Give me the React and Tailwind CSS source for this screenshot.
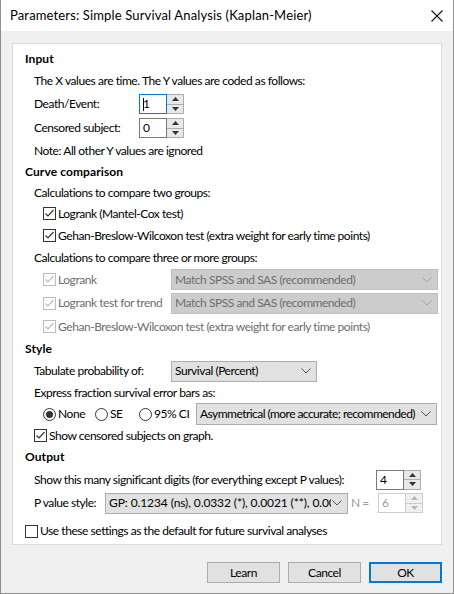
import React from 'react';

const font = { fontFamily: '"Segoe UI", Lato, "Liberation Sans", sans-serif' };

function Chevron({ disabled }) {
    return (
        <svg width="10" height="6" viewBox="0 0 10 6" className="shrink-0 ml-px">
            <polyline points="0.5,0.5 5,5 9.5,0.5" fill="none" stroke={disabled ? '#a8a8a8' : '#505050'} strokeWidth="1" />
        </svg>
    );
}

function Check({ checked = true, disabled = false, label, boxClass = '' }) {
    const c = disabled ? '#bcbcbc' : '#333333';
    return (
        <div className={`flex items-center ${disabled ? 'text-[#6d6d6d]' : 'text-black'}`}>
            <span className={`w-[13px] h-[13px] border bg-white flex items-center justify-center shrink-0 ${disabled ? 'border-[#bcbcbc]' : 'border-[#333]'} ${boxClass}`}>
                {checked && (
                    <svg width="11" height="11" viewBox="0 0 11 11">
                        <polyline points="1.5,5.5 4,8 9.5,2" fill="none" stroke={c} strokeWidth="1.2" />
                    </svg>
                )}
            </span>
            <span className="ml-[2px] whitespace-nowrap">{label}</span>
        </div>
    );
}

function Radio({ on, label }) {
    return (
        <div className="flex items-center">
            <span className="w-[13px] h-[13px] rounded-full border border-[#333] bg-white flex items-center justify-center shrink-0">
                {on && <span className="w-[7px] h-[7px] rounded-full bg-[#333]" />}
            </span>
            <span className="ml-[2px] whitespace-nowrap">{label}</span>
        </div>
    );
}

function Select({ value, className = '', disabled = false }) {
    return (
        <div className={`flex items-center border pl-[3px] pr-[5px] overflow-hidden shrink-0 ${disabled ? 'bg-[#cccccc] border-[#bfbfbf] text-[#6d6d6d]' : 'bg-[#e1e1e1] border-[#adadad] text-black'} ${className}`}>
            <div className="flex-1 min-w-0 overflow-hidden whitespace-nowrap">{value}</div>
            <Chevron disabled={disabled} />
        </div>
    );
}

function Spin({ value, focused = false, disabled = false, className = '' }) {
    const border = focused ? 'border-[#0078d7]' : disabled ? 'border-[#cccccc]' : 'border-[#7a7a7a]';
    const tri = disabled ? '#b5b5b5' : '#333';
    return (
        <div className={`flex h-[20px] shrink-0 ${className}`}>
            <div className={`w-[28px] border bg-white flex items-center pl-[3px] ${border} ${disabled ? 'text-[#9a9a9a]' : 'text-black'}`}>
                {focused && <span className="w-px h-[13px] bg-black -mr-px" />}
                {value}
            </div>
            <div className={`w-[17px] border border-l-0 flex flex-col ${disabled ? 'border-[#cccccc] bg-[#f0f0f0]' : 'border-[#adadad] bg-[#e8e8e8]'}`}>
                <div className={`flex-1 flex items-center justify-center border-b ${disabled ? 'border-[#cccccc]' : 'border-[#adadad]'}`}>
                    <svg width="7" height="4" viewBox="0 0 7 4"><polygon points="0,4 3.5,0 7,4" fill={tri} /></svg>
                </div>
                <div className="flex-1 flex items-center justify-center">
                    <svg width="7" height="4" viewBox="0 0 7 4"><polygon points="0,0 3.5,4 7,0" fill={tri} /></svg>
                </div>
            </div>
        </div>
    );
}

function Row({ h, className = '', children }) {
    return <div className={`flex items-center ${className}`} style={{ height: h }}>{children}</div>;
}

function Heading({ h, children }) {
    return <Row h={h} className="pl-[12px] font-bold tracking-[0.1px]">{children}</Row>;
}

export default function App() {
    return (
        <div className="w-[454px] h-[594px] bg-[#f0f0f0] border-x border-b border-[#8f8f8f] text-[12px] tracking-[-0.45px] text-black flex flex-col overflow-hidden" style={font}>
            <div className="h-[31px] bg-white flex items-center justify-between pl-[9px] pr-[10px] shrink-0">
                <span className="text-[13px] tracking-[0.15px] text-black">Parameters: Simple Survival Analysis (Kaplan-Meier)</span>
                <svg width="12" height="12" viewBox="0 0 12 12">
                    <path d="M0.5 0.5 L11.5 11.5 M11.5 0.5 L0.5 11.5" stroke="#111" strokeWidth="1.1" />
                </svg>
            </div>

            <div className="mx-[11px] mt-[12px] h-[502px] bg-white border border-[#dcdcdc] pt-[4px] flex flex-col shrink-0">
                <Heading h={22}>Input</Heading>
                <Row h={22} className="pl-[21px]">The X values are time. The Y values are coded as follows:</Row>
                <Row h={24} className="pl-[21px]">
                    <span className="w-[105px]">Death/Event:</span>
                    <Spin value="1" focused />
                </Row>
                <Row h={24} className="pl-[21px]">
                    <span className="w-[105px]">Censored subject:</span>
                    <Spin value="0" />
                </Row>
                <Row h={21} className="pl-[21px]">Note: All other Y values are ignored</Row>

                <Heading h={21}>Curve comparison</Heading>
                <Row h={21} className="pl-[21px]">Calculations to compare two groups:</Row>
                <Row h={21} className="pl-[30px]"><Check label="Logrank (Mantel-Cox test)" /></Row>
                <Row h={23} className="pl-[30px]"><Check label="Gehan-Breslow-Wilcoxon test (extra weight for early time points)" /></Row>
                <Row h={21} className="pl-[21px]">Calculations to compare three or more groups:</Row>
                <Row h={23} className="pl-[30px]">
                    <div className="w-[128px]"><Check disabled label="Logrank" /></div>
                    <Select disabled value="Match SPSS and SAS (recommended)" className="w-[267px] h-[21px]" />
                </Row>
                <Row h={24} className="pl-[30px]">
                    <div className="w-[128px]"><Check disabled label="Logrank test for trend" /></div>
                    <Select disabled value="Match SPSS and SAS (recommended)" className="w-[267px] h-[21px]" />
                </Row>
                <Row h={23} className="pl-[30px]"><Check disabled label="Gehan-Breslow-Wilcoxon test (extra weight for early time points)" /></Row>

                <Heading h={22}>Style</Heading>
                <Row h={22} className="pl-[21px]">
                    <span className="w-[137px]">Tabulate probability of:</span>
                    <Select value="Survival (Percent)" className="w-[146px] h-[21px]" />
                </Row>
                <Row h={21} className="pl-[21px]">Express fraction survival error bars as:</Row>
                <Row h={22} className="pl-[30px]">
                    <div className="w-[52px]"><Radio on label="None" /></div>
                    <div className="w-[44px]"><Radio label="SE" /></div>
                    <div className="w-[57px]"><Radio label="95% CI" /></div>
                    <Select value="Asymmetrical (more accurate; recommended)" className="w-[241px] h-[22px] tracking-[-0.55px]" />
                </Row>
                <Row h={21} className="pl-[21px]"><Check label="Show censored subjects on graph." /></Row>

                <Heading h={22}>Output</Heading>
                <Row h={23} className="pl-[21px]">
                    <span className="w-[342px] whitespace-nowrap">Show this many significant digits (for everything except P values):</span>
                    <Spin value="4" />
                </Row>
                <Row h={24} className="pl-[21px]">
                    <span className="w-[71px]">P value style:</span>
                    <Select value="GP: 0.1234 (ns), 0.0332 (*), 0.0021 (**), 0.0002 (***)" className="w-[243px] h-[21px] text-[#111] tracking-[-0.1px]" />
                    <span className="ml-[3px] w-[27px] text-[#9a9a9a]">N =</span>
                    <Spin value="6" disabled />
                </Row>
                <Row h={22} className="pl-[12px] mt-[5px]"><Check checked={false} label="Use these settings as the default for future survival analyses" /></Row>
            </div>

            <div className="flex justify-end gap-[8px] pr-[11px] mt-[17px]">
                <button className="w-[73px] h-[21px] bg-[#e1e1e1] border border-[#adadad] text-black">Learn</button>
                <button className="w-[73px] h-[21px] bg-[#e1e1e1] border border-[#adadad] text-black">Cancel</button>
                <button className="w-[73px] h-[21px] bg-[#e1e1e1] border-2 border-[#0078d7] text-black">OK</button>
            </div>
        </div>
    );
}
